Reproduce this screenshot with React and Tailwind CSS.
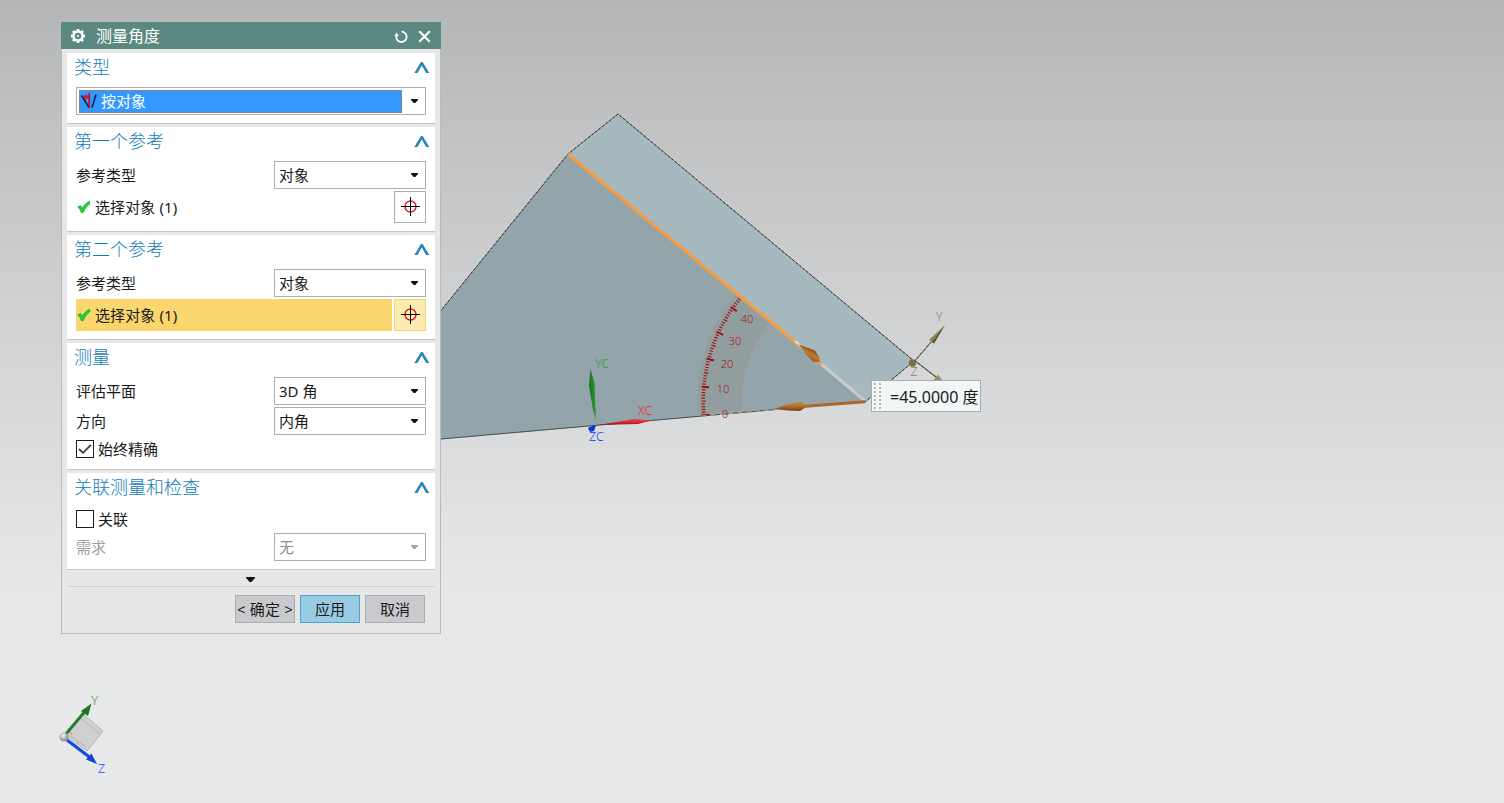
import React from "react";

const FONT = "font-['Noto_Sans','Noto_Sans_CJK_SC',sans-serif]";

const CENTER = { x: 865, y: 401 };

function polar(r, deg) {
  const a = (deg * Math.PI) / 180;
  return [CENTER.x - r * Math.cos(a), CENTER.y - r * Math.sin(a)];
}

function sector(outer, inner, from, to) {
  const [x1, y1] = polar(outer, from);
  const [x2, y2] = polar(outer, to);
  const [x3, y3] = polar(inner, to);
  const [x4, y4] = polar(inner, from);
  return `M${x1} ${y1}A${outer} ${outer} 0 0 1 ${x2} ${y2}L${x3} ${y3}A${inner} ${inner} 0 0 0 ${x4} ${y4}Z`;
}

function Protractor() {
  const ticks = Array.from({ length: 46 }, (_, i) => i);
  return (
    <g>
      <path d={sector(168, 123, -4.5, 39.7)} fill="#929d9f" stroke="#a09f9f" strokeWidth="0.8" />
      {ticks.map((t) => {
        const major = t % 10 === 0;
        const [x1, y1] = polar(major ? 164 : 163.5, t - 5);
        const [x2, y2] = polar(major ? 156.5 : t % 5 === 0 ? 159 : 160, t - 5);
        return <line key={t} x1={x1} y1={y1} x2={x2} y2={y2} stroke="#a40d12" strokeWidth={major ? 2 : 1.1} />;
      })}
      <g fill="#a3161c" fontSize="11" textAnchor="middle">
        <text x="725" y="418">0</text>
        <text x="723" y="393">10</text>
        <text x="727" y="368">20</text>
        <text x="735" y="345">30</text>
        <text x="747" y="323">40</text>
      </g>
    </g>
  );
}

function Scene() {
  return (
    <svg className={`block font-light ${FONT}`} width="1504" height="803" viewBox="0 0 1504 803">
      <defs>
        <linearGradient id="cone" x1="0" y1="0" x2="0" y2="1">
          <stop offset="0" stopColor="#c98436" />
          <stop offset="0.4" stopColor="#b8742c" />
          <stop offset="1" stopColor="#6f4216" />
        </linearGradient>
        <linearGradient id="coneDiag" x1="0.7" y1="0.2" x2="0.3" y2="0.8">
          <stop offset="0" stopColor="#6f4216" />
          <stop offset="0.5" stopColor="#c07c32" />
          <stop offset="1" stopColor="#8a531d" />
        </linearGradient>
        <linearGradient id="red" x1="0" y1="0" x2="0" y2="1">
          <stop offset="0.3" stopColor="#e8393b" />
          <stop offset="1" stopColor="#8f1618" />
        </linearGradient>
        <linearGradient id="green" x1="0" y1="0" x2="1" y2="0">
          <stop offset="0" stopColor="#1d6b22" />
          <stop offset="1" stopColor="#2f9e35" />
        </linearGradient>
        <radialGradient id="ball" cx="0.4" cy="0.35">
          <stop offset="0" stopColor="#f8f8f8" />
          <stop offset="1" stopColor="#969696" />
        </radialGradient>
      </defs>

      {/* solid body */}
      <polygon points="400,361 568,154 865,402 400,443" fill="#93a4aa" />
      <polygon points="568,154 618,114 914,361 865,402" fill="#a6b9bf" />
      <path d="M400 361L568 154L618 114L914 361L865 402" fill="none" stroke="#6b7073" strokeWidth="1" />
      <path d="M400 361L568 154L618 114L914 361L865 402" fill="none" stroke="#1c1c1c" strokeWidth="0.9" strokeDasharray="2 2.500" />
      <Protractor />
      <path d="M400 442.6L776 409.5" stroke="#4b5052" strokeWidth="1" />
      <path d="M702 416L776 409.5" stroke="#b9a184" strokeWidth="1.2" strokeDasharray="4 5" />

      {/* measured directions */}
      <path d="M568 154L800 346" stroke="#fb9c3c" strokeWidth="3" />
      <path d="M795 341L800 345" stroke="#e4dcd4" strokeWidth="2" />
      <path d="M820 363L865 401" stroke="#c8cacb" strokeWidth="3" />
      <polygon points="799,344.500 815,350.500 819.500,358 820,362.500 813,361.500 807,355.500" fill="url(#coneDiag)" />
      <circle cx="820.5" cy="363.500" r="1.700" fill="#fb9c3c" />
      <path d="M806 406.200L865 401.700" stroke="#ab672a" strokeWidth="3" />
      <polygon points="774,409 787,404.500 800,402 808,406 800,411 788,410.500" fill="url(#cone)" />

      {/* working coordinate system */}
      <polygon points="590.500,369 594.500,383 596,420 593,410 589,386" fill="url(#green)" />
      <polygon points="598,425 634,419 652,420.500 638,424" fill="url(#red)" />
      <path d="M588 428L593 425.500L596 425.500L594 431L590 432Z" fill="#0b38d8" />
      <g fontSize="12.5">
        <text x="595" y="367.500" fill="#2ba02f">YC</text>
        <text x="638" y="415" fill="#ea2a2e">XC</text>
        <text x="589" y="440.500" fill="#1438ef">ZC</text>
      </g>

      {/* datum coordinate system */}
      <path d="M914 362L932 341M914 360L940 380" fill="none" stroke="#6b664c" strokeWidth="1.100" />
      <path d="M914 362L932 341M914 360L940 380" stroke="#222" strokeWidth="0.8" strokeDasharray="2 3" />
      <polygon points="945,325 929,340 934,343.500" fill="#8a8154" />
      <polygon points="945,325 932,342 934,343.500" fill="#5c5637" />
      <polygon points="938,374.500 945,384 933,381" fill="#9a905f" />
      <circle cx="912.500" cy="363" r="3.700" fill="#777047" />
      <g fontSize="12.5" fill="#8c8462" textAnchor="middle">
        <text x="939" y="321">Y</text>
        <text x="914" y="375.500">Z</text>
      </g>

      {/* view triad */}
      <polygon points="83,714 103,731 87,751 66,736" fill="#cfd1d1" stroke="#b2b4b4" strokeWidth="1" />
      <path d="M80.500 718L100 734M69 735L87 748M66 736L83 714" stroke="#b3b5b5" fill="none" />
      <path d="M68 728l4 7" stroke="#ef8080" />
      <path d="M66 734L84 712.500" stroke="#277d2b" strokeWidth="3" />
      <polygon points="91.500,703.500 81,711 88,716" fill="#237327" />
      <path d="M67 740L90 757.500" stroke="#164ae2" strokeWidth="3.200" />
      <polygon points="97,764 86,759.500 91.500,753.500" fill="#0f41d4" />
      <circle cx="64" cy="737" r="4.600" fill="url(#ball)" />
      <g fontSize="12.5" textAnchor="middle">
        <text x="94.500" y="704.500" fill="#2f9a35">Y</text>
        <text x="101.500" y="773" fill="#1d4dff">Z</text>
      </g>
    </svg>
  );
}

function Arrow({ className = "text-[#111]" }) {
  return (
    <svg className={className} width="7" height="4" viewBox="0 0 7 4">
      <path d="M0 0H7V1L4.300 4H2.700L0 1Z" fill="currentColor" />
    </svg>
  );
}

function Combo({ children, disabled }) {
  return (
    <div className={`flex h-7 w-[152px] items-center justify-between border border-[#adadad] bg-white pr-[7px] pl-1 ${disabled ? "text-[#8e8e8e]" : ""}`}>
      <span>{children}</span>
      <Arrow className={disabled ? "text-[#a6a6a6]" : "text-[#111]"} />
    </div>
  );
}

function Section({ title, children }) {
  return (
    <section className="border-b border-[#c6c6c6] bg-white px-[9px] pb-2">
      <header className="-ml-[2px] flex h-[34px] items-start justify-between">
        <h2 className="text-[18px] leading-[28px] font-light text-[#127bb5]">{title}</h2>
        <svg className="mt-[7px] -mr-1 text-[#2b87ba]" width="16" height="14" viewBox="0 0 16 14">
          <path d="M0.300 13L6.900 2H8.700L15.300 13H12.100L7.800 5.500L3.500 13Z" fill="currentColor" />
        </svg>
      </header>
      <div className="flex flex-col gap-0.5">{children}</div>
    </section>
  );
}

function Field({ label, value, disabled }) {
  return (
    <div className="flex items-center justify-between">
      <span className={disabled ? "text-[#a0a0a0]" : ""}>{label}</span>
      <Combo disabled={disabled}>{value}</Combo>
    </div>
  );
}

function SelectObject({ active }) {
  return (
    <div className="flex h-8 gap-0.5">
      <div className={`flex flex-1 items-center gap-1 pl-px ${active ? "bg-[#fbd66f]" : ""}`}>
        <svg width="14" height="14" viewBox="0 0 14 14">
          <path d="M0.800 7L3.500 5.500L5.300 8.200C7 5 9.500 2.500 12.600 1.300L12.600 4C9.500 6.400 7.500 9 6.300 12.600H4.300C3.500 10 2.200 8.300 0.800 7Z" fill="#19d637" stroke="#0f9a27" strokeWidth="0.700" />
        </svg>
        <span className="tracking-[0.1px]">选择对象 (1)</span>
      </div>
      <div className={`flex size-8 items-center justify-center border ${active ? "border-[#fbd66f] bg-[#faebb0]" : "border-[#adadad] bg-white"}`}>
        <svg width="20" height="20" viewBox="0 0 20 20">
          <circle cx="10.500" cy="9.500" r="5.500" fill="none" stroke="#e0191d" strokeWidth="1.400" />
          <path d="M1 9.500H20M10.500 0V19" stroke="#000" strokeWidth="1" />
        </svg>
      </div>
    </div>
  );
}

function Check({ label, checked }) {
  return (
    <div className="flex h-6 items-center gap-1">
      <span className="flex size-[18px] items-center justify-center border border-[#1c1c1c] bg-white">
        {checked && (
          <svg width="14" height="12" viewBox="0 0 14 12">
            <path d="M1 6L5 9.800L13 1.800" fill="none" stroke="#3a3a3a" strokeWidth="1.800" />
          </svg>
        )}
      </span>
      <span>{label}</span>
    </div>
  );
}

function Dialog() {
  return (
    <div className={`absolute top-[22px] left-[61px] flex h-[612px] w-[380px] flex-col border border-t-0 border-[#b9babc] bg-[#e7e7e7] text-[15px] leading-5 text-[#1a1a1a] ${FONT}`}>
      <div className="-mx-px flex h-[27px] shrink-0 items-center bg-[#5b8982] pr-[10px] pl-[9px] text-white">
        <svg width="16" height="16" viewBox="0 0 16 16">
          <g stroke="#fff" strokeWidth="2.800">
            <path d="M8 1V15M1 8H15M3 3L13 13M13 3L3 13" />
          </g>
          <circle cx="8" cy="8" r="4.500" fill="#5b8982" stroke="#fff" strokeWidth="2.400" />
          <circle cx="8" cy="8" r="1" fill="#fff" />
        </svg>
        <span className="ml-[10px] flex-1 pt-px text-[16px] leading-[27px]">测量角度</span>
        <svg className="mt-0.5 mr-[10px]" width="14" height="14" viewBox="0 0 14 14">
          <path d="M7.500 1.600A5.200 5.200 0 1 1 2.300 6" fill="none" stroke="#fff" strokeWidth="1.800" />
          <path d="M0.300 6L2.800 2.600L5 6.300Z" fill="#fff" />
        </svg>
        <svg className="mt-0.5" width="13" height="13" viewBox="0 0 13 13">
          <path d="M1.300 1.300L11.700 11.700M11.700 1.300L1.300 11.700" stroke="#fff" strokeWidth="2.200" />
        </svg>
      </div>

      <div className="flex flex-col gap-[3px] px-[5px] pt-1">
        <Section title="类型">
          <div className="flex h-7 items-center border border-[#adadad] bg-white pr-[7px] pl-0.5">
            <div className="flex h-[23px] w-[323px] items-center border border-dotted border-[#c9721f] bg-[#3399ff] text-white">
              <svg width="18" height="18" viewBox="0 0 18 18">
                <path d="M1.500 3.500L9 15.500M12 15.500L16 2.500" stroke="#0b1a40" strokeWidth="1.500" fill="none" />
                <path d="M9.200 1V16" stroke="#cf0d16" strokeWidth="1.700" fill="none" />
                <path d="M2.500 6C4.500 4 6.500 4.500 9 5M4.300 3L5.300 7.500M6.500 2.500L7 7" stroke="#cf0d16" strokeWidth="1.200" fill="none" />
              </svg>
              <span className="ml-[3px] -mt-px">按对象</span>
            </div>
            <div className="flex flex-1 justify-end">
              <Arrow />
            </div>
          </div>
        </Section>

        <Section title="第一个参考">
          <Field label="参考类型" value="对象" />
          <SelectObject />
        </Section>

        <Section title="第二个参考">
          <Field label="参考类型" value="对象" />
          <SelectObject active />
        </Section>

        <Section title="测量">
          <Field label="评估平面" value="3D 角" />
          <Field label="方向" value="内角" />
          <Check label="始终精确" checked />
        </Section>

        <Section title="关联测量和检查">
          <Check label="关联" />
          <Field label="需求" value="无" disabled />
        </Section>
      </div>

      <div className="mx-[5px] flex h-[17px] items-center justify-center border-b border-[#d2d2d2] pt-0.5">
        <svg className="-ml-px" width="9" height="5" viewBox="0 0 9 5">
          <path d="M0 0H9V1L5.300 5H3.700L0 1Z" fill="#111" />
        </svg>
      </div>
      <div className="flex justify-end gap-[5px] pt-2 pr-[15px]">
        <button className="h-7 w-[60px] border border-[#adadad] bg-[#c9cacd] whitespace-nowrap">
          <span className="-mx-1 tracking-[0.15px]">&lt; 确定 &gt;</span>
        </button>
        <button className="h-7 w-[60px] border border-[#4da3cf] bg-[#9acbe5]">应用</button>
        <button className="h-7 w-[60px] border border-[#adadad] bg-[#c9cacd]">取消</button>
      </div>
    </div>
  );
}

function AngleLabel() {
  const dots = Array.from({ length: 14 }, (_, i) => i);
  return (
    <div className={`absolute top-[380px] left-[871px] flex h-8 w-[110px] items-center border border-[#a9abac] bg-[#f1f6f6] pl-0.5 text-[#1a1a1a] ${FONT}`}>
      <div className="grid grid-cols-2 gap-x-[3px] gap-y-0.5">
        {dots.map((d) => (
          <span key={d} className="size-0.5 bg-[#b4b6b7]" />
        ))}
      </div>
      <span className="ml-[9px] pt-0.5 text-[16px] whitespace-nowrap">=45.0000 度</span>
    </div>
  );
}

export default function App() {
  return (
    <main className="relative h-[803px] w-[1504px] overflow-hidden bg-[linear-gradient(180deg,#b4b5b7_0px,#bfc0c2_110px,#cfd0d2_300px,#dadbdd_430px,#e6e7e9_590px,#e7e9ea_803px)]">
      <Scene />
      <AngleLabel />
      <Dialog />
    </main>
  );
}
